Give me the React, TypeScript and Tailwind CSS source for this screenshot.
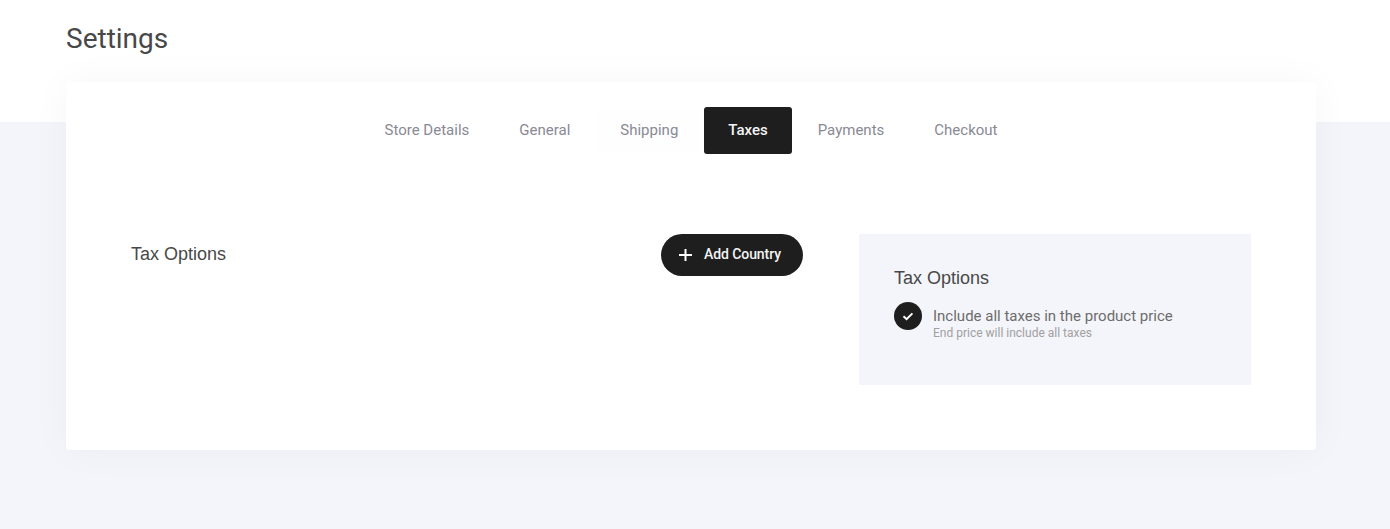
const tabs = ["Store Details", "General", "Shipping", "Taxes", "Payments", "Checkout"];

const tabClass = (t: string) => {
  if (t === "Taxes") return "mx-px rounded-[3px] bg-[#1e1e1e] px-6 font-medium text-[#f4f4f4]";
  if (t === "Shipping") return "my-px ml-0.5 px-[23px] mr-0.5 bg-[#fefefe] text-[#898993]";
  return "px-[25px] text-[#898993]";
};

export default function App() {
  return (
    <div className="h-[529px] overflow-hidden bg-[linear-gradient(to_bottom,#fff_122px,#f4f5fa_122px)] px-[66px] pt-[18px] font-['Roboto',sans-serif] text-[#484848]">
      <h1 className="h-[42px] text-[28px] leading-[42px]">Settings</h1>
      <main className="mt-[22px] h-[368px] w-[1250px] rounded-[4px] bg-white pt-[25px] shadow-[0_0_40px_rgba(0,0,0,0.04)]">
        <nav className="flex h-[47px] justify-center text-[15px]">
          {tabs.map((t) => (
            <button key={t} className={tabClass(t)}>
              {t}
            </button>
          ))}
        </nav>
        <div className="mt-20 flex pl-[65px]">
          <section className="flex w-[672px] items-start justify-between">
            <h2 className="font-['Liberation_Sans',sans-serif] text-[18px] leading-10">Tax Options</h2>
            <button className="flex h-[42px] w-[142px] items-center rounded-full bg-[#1e1e1e] pl-[18px] text-[14px] font-medium text-[#f4f4f4]">
              <svg width="13" height="12" viewBox="0 0 13 12" className="mr-3" stroke="#fff" strokeWidth="2">
                <path d="M6.5 0v12M0 6h13" />
              </svg>
              <span className="-mt-0.5 tracking-[-0.08px]">Add Country</span>
            </button>
          </section>
          <aside className="ml-14 h-[151px] w-[392px] bg-[#f4f5fa] pl-[35px] pt-[33px]">
            <h2 className="font-['Liberation_Sans',sans-serif] text-[18px] leading-[22px]">Tax Options</h2>
            <div className="mt-[13px] flex">
              <span className="flex size-7 items-center justify-center rounded-full bg-[#1e1e1e]">
                <svg width="12" height="10" viewBox="0 0 12 10" fill="none" stroke="#fff" strokeWidth="2">
                  <path d="M1.5 5.2 4.6 8.2 10.4 2.4" />
                </svg>
              </span>
              <div className="ml-[11px] pt-[5px]">
                <p className="text-[15px] leading-[18px] text-[#6c6c6c]">Include all taxes in the product price</p>
                <p className="text-[12px] leading-4 text-[#a0a0a0]">End price will include all taxes</p>
              </div>
            </div>
          </aside>
        </div>
      </main>
    </div>
  );
}
